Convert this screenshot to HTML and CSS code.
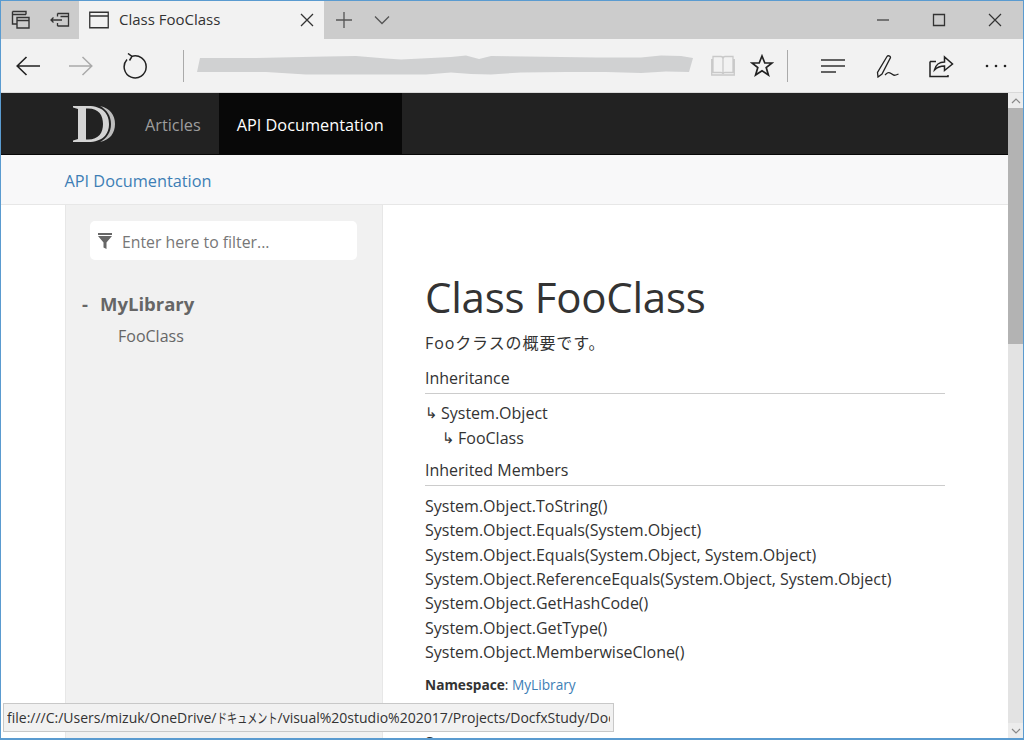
FILE: index.html
```html
<!DOCTYPE html>
<html lang="ja">
<head>
<meta charset="utf-8">
<title>Class FooClass</title>
<link rel="stylesheet" href="styles.css">
</head>
<body>
<div class="window">
  <div class="tabbar">
    <div class="tab-tools">
      <svg class="ic" width="22" height="22" viewBox="0 0 22 22"><path d="M2.500 2.500h13.500v3M2.500 2.500v12.500h4.500M2.500 5.500h13.500M7 8.500h12v10.500H7zM7 11.500h12" fill="none" stroke="#333" stroke-width="1.400"/></svg>
      <svg class="ic" width="22" height="22" viewBox="0 0 22 22"><path d="M8.500 4.500h11v12.500h-11M8.500 4.500v3M8.500 14v3M11.500 7.500h8M13 11H2M4.500 8.500L2 11l2.500 2.500" fill="none" stroke="#333" stroke-width="1.300"/></svg>
    </div>
    <div class="tab">
      <svg class="tab-ic" width="20" height="18" viewBox="0 0 20 18"><path d="M.75 1.250h18.500v15.500H.75zM.75 5h18.500" fill="none" stroke="#333" stroke-width="1.300"/></svg>
      <span class="tab-title">Class FooClass</span>
      <svg class="tab-x" width="14" height="14" viewBox="0 0 14 14"><path d="M1 1l12 12M13 1L1 13" stroke="#333" stroke-width="1.300"/></svg>
    </div>
    <div class="tab-new">
      <svg width="18" height="18" viewBox="0 0 18 18"><path d="M9 1v16M1 9h16" stroke="#555" stroke-width="1.300"/></svg>
      <svg width="16" height="10" viewBox="0 0 16 10"><path d="M1 1.500l7 7 7-7" fill="none" stroke="#555" stroke-width="1.300"/></svg>
    </div>
    <div class="winctl">
      <svg width="14" height="14" viewBox="0 0 14 14"><path d="M1 7h12" stroke="#444" stroke-width="1.300"/></svg>
      <svg width="14" height="14" viewBox="0 0 14 14"><path d="M1.500 1.500h11v11h-11z" fill="none" stroke="#333" stroke-width="1.300"/></svg>
      <svg width="14" height="14" viewBox="0 0 14 14"><path d="M1 1l12 12M13 1L1 13" stroke="#333" stroke-width="1.200"/></svg>
    </div>
  </div>
  <div class="toolbar">
    <svg class="nav-back" width="24" height="20" viewBox="0 0 24 20"><path d="M24 10H1M10.500 1L1.200 10l9.300 9" fill="none" stroke="#222" stroke-width="1.600"/></svg>
    <svg class="nav-fwd" width="24" height="20" viewBox="0 0 24 20"><path d="M0 10h23M13.500 1l9.300 9-9.300 9" fill="none" stroke="#aaa" stroke-width="1.500"/></svg>
    <svg class="nav-reload" width="26" height="26" viewBox="0 0 26 26"><path d="M8.500 3.500A11 11 0 1 1 4 6.500M5 .5L9 3.500L6.500 7.500" fill="none" stroke="#222" stroke-width="1.500"/></svg>
    <div class="sep sep-a"></div>
    <svg class="addr" width="500" height="22" viewBox="0 0 500 22"><path d="M4 3L60 3L130 1.500L160 1L190 3.500L205 4.500L235 3L255 2L270 .5L283 4L295 1L330 1.500L400 2.500L445 2.500L465 .5L485 1L497 3L493 17L470 16.500L445 18L410 17L370 17L325 17.500L295 19.500L275 19L255 17.500L230 19.500L110 19.500L70 17L1 17z" fill="#d0d1d2"/></svg>
    <svg class="book" width="24" height="24" viewBox="0 0 24 24"><path d="M2 2.500h8c1 0 2 1 2 2.500v15c0-1-1-1.500-2-1.500H2zM22 2.500h-8c-1 0-2 1-2 2.500v15c0-1 1-1.500 2-1.500h8zM.7 5v16h22.600V5" fill="none" stroke="#c9c9c9" stroke-width="1.300"/></svg>
    <svg class="star" width="24" height="24" viewBox="0 0 24 24"><path d="M12 2l2.800 7h7.200l-5.800 4.600 2.200 7.400-6.400-4.300-6.400 4.300 2.200-7.400L2 9h7.200z" fill="none" stroke="#222" stroke-width="1.700"/></svg>
    <div class="sep sep-b"></div>
    <svg class="hub" width="26" height="16" viewBox="0 0 26 16"><path d="M1 2h24M1 8h24M1 14h15" stroke="#333" stroke-width="1.500"/></svg>
    <svg class="pen" width="24" height="24" viewBox="0 0 24 24"><path d="M11 2.500c1-1.500 3.500-.5 3.500 1L6 20l-4 3-.5-4.500zM9 21c2-2 3.500-3.500 6-1.500s3 2.500 7.500.5" fill="none" stroke="#222" stroke-width="1.300"/></svg>
    <svg class="share" width="26" height="24" viewBox="0 0 26 24"><path d="M2 7.500v15h18v-1.500M2 7.500h6M6.500 16c1-5 5-8 10-8V3l8 7-8 6.500V12c-4 0-7 1-10 4z" fill="none" stroke="#222" stroke-width="1.500"/></svg>
    <svg class="more" width="22" height="4" viewBox="0 0 22 4"><circle cx="2" cy="2" r="1.300" fill="#222"/><circle cx="11" cy="2" r="1.300" fill="#222"/><circle cx="20" cy="2" r="1.300" fill="#222"/></svg>
  </div>
  <div class="viewport">
    <div class="page">
      <header class="navbar">
        <svg class="logo" width="44" height="38" viewBox="0 0 44 38"><path d="M0 1h15c15 0 21 8 21 18S30 37 15 37H0v-1.500l5-1.500V4L0 2.500zM13 3.500v31h2c11 0 15-7 15-15.500S26 3.500 15 3.500z" fill="#d4d4d4" fill-rule="evenodd"/><path d="M27 1c10 2 15 9 15 18s-5 16-15 18c7-4 11-10 11-18S34 5 27 1z" fill="#bdbdbd"/></svg>
        <a class="nav-item">Articles</a>
        <a class="nav-item active">API Documentation</a>
      </header>
      <div class="crumb"><a class="link">API Documentation</a></div>
      <div class="main">
        <aside class="side">
          <div class="filter">
            <svg width="14" height="16" viewBox="0 0 14 16"><path d="M0 0h14v2H0zM0 3h14L8.500 9.500V16l-3-1.500v-5z" fill="#666"/></svg>
            <span>Enter here to filter...</span>
          </div>
          <div class="tree-root"><span class="dash">-</span>MyLibrary</div>
          <div class="tree-leaf">FooClass</div>
        </aside>
        <article class="content">
          <h1>Class FooClass</h1>
          <p class="summary">Fooクラスの概要です。</p>
          <h5>Inheritance</h5>
          <div class="lvl">System.Object</div>
          <div class="lvl lvl2">FooClass</div>
          <h5 class="h5b">Inherited Members</h5>
          <div class="members">
            <div>System.Object.ToString()</div>
            <div>System.Object.Equals(System.Object)</div>
            <div>System.Object.Equals(System.Object, System.Object)</div>
            <div>System.Object.ReferenceEquals(System.Object, System.Object)</div>
            <div>System.Object.GetHashCode()</div>
            <div>System.Object.GetType()</div>
            <div>System.Object.MemberwiseClone()</div>
          </div>
          <p class="ns"><b>Namespace</b>: <a class="link">MyLibrary</a></p>
          <p class="asm">Syntax</p>
        </article>
      </div>
    </div>
    <div class="scrollbar">
      <div class="sb-btn"><svg width="10" height="6" viewBox="0 0 10 6"><path d="M1 5l4-4 4 4" fill="none" stroke="#888" stroke-width="1.200"/></svg></div>
      <div class="sb-thumb"></div>
      <div class="sb-track"></div>
      <div class="sb-btn"><svg width="10" height="6" viewBox="0 0 10 6"><path d="M1 1l4 4 4-4" fill="none" stroke="#888" stroke-width="1.200"/></svg></div>
    </div>
    <div class="status"><div class="status-text">file:///C:/Users/mizuk/OneDrive/<span class="kana">ドキュメント</span>/visual%20studio%202017/Projects/DocfxStudy/Docs/index.html</div></div>
  </div>
</div>
</body>
</html>
```
FILE: styles.css
```css
* { box-sizing: border-box; }
html, body { margin: 0; height: 740px; overflow: hidden; }
body { font-family: "Open Sans", "Noto Sans CJK JP", sans-serif; color: #333; }
.window { width: 1024px; height: 740px; display: flex; flex-direction: column; border: 1px solid #5a9bd0; border-bottom-width: 2px; }
.tabbar { height: 38px; flex: none; background: #cccccc; display: flex; align-items: center; }
.tab-tools { width: 78px; padding-left: 9px; display: flex; gap: 17px; align-items: center; height: 100%; }
.tab { width: 245px; height: 100%; background: #f2f2f2; display: flex; align-items: center; padding-left: 10px; }
.tab-title { margin-left: 10px; font-size: 15px; line-height: 18px; padding-bottom: 2px; color: #333; flex: 1; }
.tab-x { margin-right: 10px; }
.tab-new { display: flex; align-items: center; gap: 21px; padding-left: 11px; }
.winctl { margin-left: auto; display: flex; align-items: center; gap: 42px; padding-right: 21px; }
.toolbar { height: 54px; flex: none; background: #f2f2f2; border-bottom: 1px solid #d9d9d9; display: flex; align-items: center; }
.nav-back { margin-left: 15px; }
.nav-fwd { margin-left: 29px; }
.nav-reload { margin-left: 30px; }
.sep { width: 1px; height: 32px; background: #aaa; }
.sep-a { margin-left: 34px; }
.addr { margin-left: 12px; }
.book { margin-left: 15px; }
.star { margin-left: 15px; }
.sep-b { margin-left: 13px; }
.hub { margin-left: 32px; }
.pen { margin-left: 30px; }
.share { margin-left: 28px; }
.more { margin-left: 31px; }
.viewport { flex: 1; min-height: 0; display: flex; position: relative; }
.page { flex: 1; min-width: 0; overflow: hidden; background: #fff; }
.navbar { height: 62px; background: #222; border-bottom: 1px solid #080808; display: flex; padding-left: 72px; }
.logo { margin-top: 12px; }
.nav-item { font-size: 16.300px; color: #9d9d9d; padding: 3px 18px 0; display: flex; align-items: center; }
.nav-item.active { background: #080808; color: #fff; }
.nav-item:first-of-type { margin-left: 10px; }
.crumb { height: 50px; background: #f8f8f9; border-bottom: 1px solid #e7e7e7; padding-left: 63.500px; padding-top: 3px; display: flex; align-items: center; font-size: 16.300px; }
.link { color: #3d7eb5; }
.main { display: flex; height: 600px; }
.side { width: 318px; margin-left: 64px; background: #f1f1f1; border-left: 1px solid #e7e7e7; border-right: 1px solid #e7e7e7; padding: 16px 25px 0 24px; flex: none; }
.filter { height: 39px; background: #fff; border-radius: 5px; display: flex; align-items: center; gap: 10px; padding-left: 8px; font-size: 15.800px; color: #777; }
.filter span { padding-top: 2px; }
.tree-root { margin-top: 31px; margin-left: -8px; font-size: 18.500px; font-weight: 700; color: #666; line-height: 26px; }
.dash { display: inline-block; width: 18px; }
.tree-leaf { margin-top: 8px; margin-left: 28px; font-size: 16px; color: #666; line-height: 22px; }
.content { flex: none; width: 520px; margin-left: 42px; font-size: 16px; line-height: 24.350px; }
h1 { margin: 61px 0 0; font-size: 42px; font-weight: 400; letter-spacing: -.25px; line-height: 62px; }
.summary { margin: 3px 0 0; letter-spacing: .9px; }
h5 { margin: 11px 0 0; font-size: 16px; font-weight: 400; line-height: 24px; height: 28px; border-bottom: 1px solid #ccc; }
.lvl { margin-top: 7px; padding-left: 16px; position: relative; }
.lvl::before { content: "↳"; position: absolute; margin-left: -16px; font-family: "DejaVu Sans", sans-serif; font-size: 15px; }
.lvl2 { margin-top: 0; margin-left: 17px; }
.h5b { margin-top: 8px; }
.members { margin-top: 8px; }
.ns { margin: 9px 0 0; font-size: 13.700px; }
.asm { margin: 33px 0 0; }
.scrollbar { width: 15px; flex: none; display: flex; flex-direction: column; background: #e3e3e3; }
.sb-btn { height: 15px; background: #ececec; display: flex; align-items: center; justify-content: center; }
.sb-thumb { height: 236px; background: #b3b3b3; }
.sb-track { flex: 1; }
.status { position: absolute; left: 2px; top: 610px; width: 611px; height: 29px; background: #f1f1f1; border: 1px solid #c8c8c8; padding: 0 3px; }
.status-text { font-size: 14px; line-height: 28px; white-space: nowrap; overflow: hidden; color: #333; }
.kana { display: inline-block; width: 61px; transform: scaleX(.72); transform-origin: left center; }
```
